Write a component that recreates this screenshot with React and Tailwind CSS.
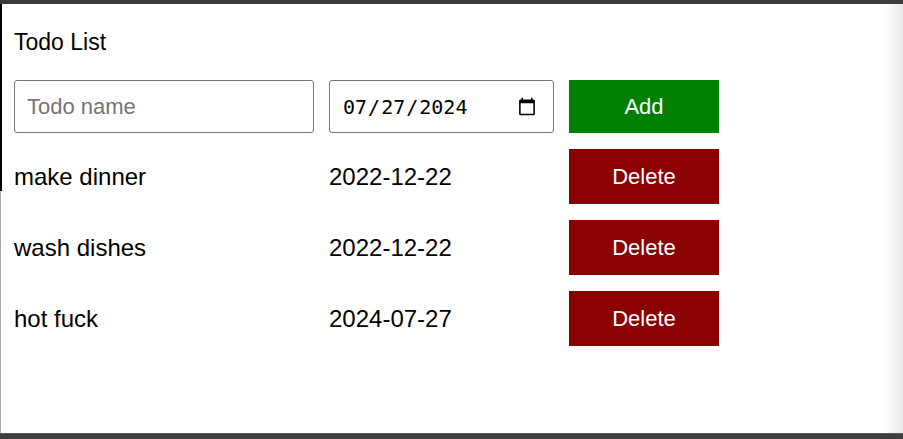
import { useState } from 'react';

const INITIAL = [
  { id: 1, name: 'make dinner', date: '2022-12-22' },
  { id: 2, name: 'wash dishes', date: '2022-12-22' },
  { id: 3, name: 'hot fuck', date: '2024-07-27' },
];

export default function App() {
  const [todos, setTodos] = useState(INITIAL);
  const [name, setName] = useState('');
  const [date, setDate] = useState('2024-07-27');

  const addTodo = () => {
    if (!name.trim()) return;
    setTodos([...todos, { id: Date.now(), name, date }]);
    setName('');
  };

  const removeTodo = (id) => setTodos(todos.filter((t) => t.id !== id));

  return (
    <div className="flex h-[439px] w-[903px] flex-col overflow-hidden bg-white font-['Liberation_Sans',Arial,sans-serif] text-black">
      <div className="h-[4px] shrink-0 bg-[#3c3c3c]" />
      <div className="flex min-h-0 flex-1">
        <div className="flex w-[2px] shrink-0 flex-col">
          <div className="h-[187px] bg-black" />
          <div className="w-[1px] flex-1 bg-[#a8a8a8]" />
        </div>
        <div className="flex flex-1 flex-col pl-[12px] pt-[24px]">
          <div className="text-[23px] leading-[28px]">Todo List</div>
          <div className="mt-[24px] flex gap-[15px]">
            <input
              value={name}
              onChange={(e) => setName(e.target.value)}
              placeholder="Todo name"
              className="h-[53px] w-[300px] rounded-[3px] border border-[#767676] px-[12px] text-[22px] outline-none placeholder:text-[#757575]"
            />
            <input
              type="date"
              value={date}
              onChange={(e) => setDate(e.target.value)}
              className="h-[53px] w-[225px] rounded-[3px] border border-[#767676] pl-[12px] pr-[14px] font-['DejaVu_Sans_Mono',monospace] text-[20px] outline-none"
            />
            <button onClick={addTodo} className="h-[53px] w-[150px] bg-[#008000] text-[22px] text-white">
              Add
            </button>
          </div>
          <div className="mt-[16px] flex flex-col gap-[16px]">
            {todos.map((t) => (
              <div key={t.id} className="flex h-[55px] items-center gap-[15px]">
                <div className="w-[300px] text-[24px]">{t.name}</div>
                <div className="w-[225px] text-[24px]">{t.date}</div>
                <button
                  onClick={() => removeTodo(t.id)}
                  className="h-[55px] w-[150px] bg-[#8b0000] text-[22px] text-white"
                >
                  Delete
                </button>
              </div>
            ))}
          </div>
        </div>
        <div className="w-[18px] shrink-0 bg-gradient-to-r from-white to-[#e9e9e9]" />
      </div>
      <div className="h-[6px] shrink-0 border-t border-[#5a5a5a] bg-[#3e3e3e]" />
    </div>
  );
}
